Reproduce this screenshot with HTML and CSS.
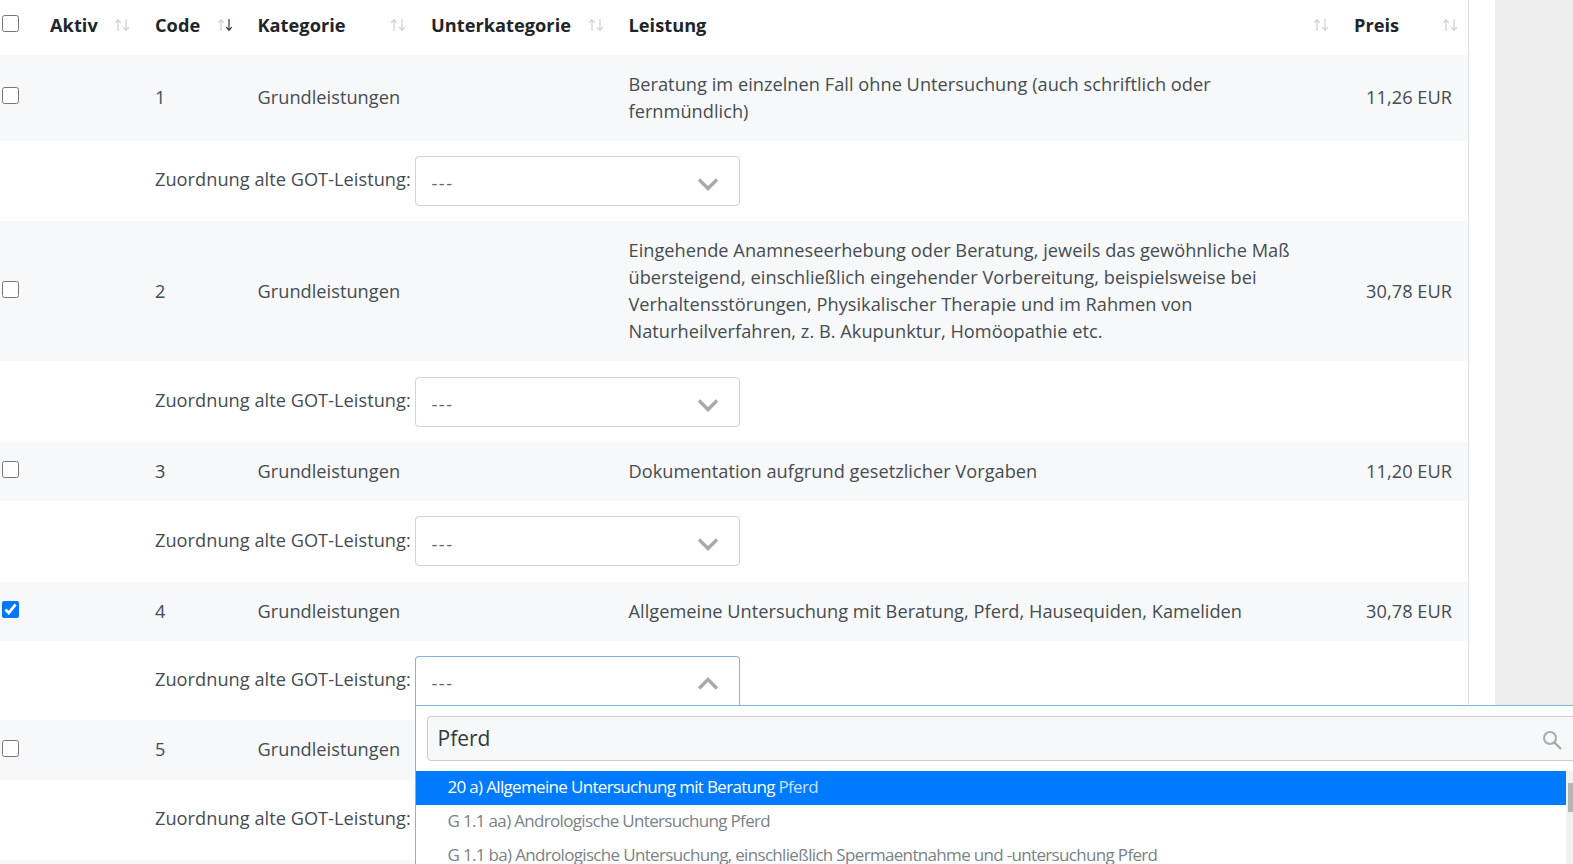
FILE: index.html
```html
<!DOCTYPE html>
<html lang="de">
<head>
  <meta charset="UTF-8" />
  <meta name="viewport" content="width=device-width, initial-scale=1.0"/>
  <title>Leistungen</title>
  <link rel="stylesheet" href="styles.css">
</head>
<body>
  <svg class="defs" width="0" height="0">
    <symbol id="arrow-up" viewBox="0 0 8 14"><path d="M4 13V2M1.2 4.8 4 1.6l2.8 3.2" fill="none" stroke="currentColor" stroke-width="1.2"/></symbol>
    <symbol id="arrow-down" viewBox="0 0 8 14"><path d="M4 1v11M1.2 9.2 4 12.4l2.8-3.2" fill="none" stroke="currentColor" stroke-width="1.2"/></symbol>
    <symbol id="chevron" viewBox="0 0 22 14"><path d="M2 2.5l9 9 9-9" fill="none" stroke="currentColor" stroke-width="3.4"/></symbol>
  </svg>

  <div class="page">
    <div class="content">
      <table class="services">
        <colgroup>
          <col class="col-check"><col class="col-active"><col class="col-code"><col class="col-cat"><col class="col-subcat"><col class="col-service"><col class="col-price">
        </colgroup>
        <thead>
          <tr>
            <th class="check"><input type="checkbox"></th>
            <th><div class="head">Aktiv <span class="sort"><svg><use href="#arrow-up"/></svg><svg><use href="#arrow-down"/></svg></span></div></th>
            <th><div class="head">Code <span class="sort"><svg><use href="#arrow-up"/></svg><svg class="on"><use href="#arrow-down"/></svg></span></div></th>
            <th><div class="head">Kategorie <span class="sort"><svg><use href="#arrow-up"/></svg><svg><use href="#arrow-down"/></svg></span></div></th>
            <th><div class="head">Unterkategorie <span class="sort"><svg><use href="#arrow-up"/></svg><svg><use href="#arrow-down"/></svg></span></div></th>
            <th><div class="head">Leistung <span class="sort"><svg><use href="#arrow-up"/></svg><svg><use href="#arrow-down"/></svg></span></div></th>
            <th class="last"><div class="head">Preis <span class="sort"><svg><use href="#arrow-up"/></svg><svg><use href="#arrow-down"/></svg></span></div></th>
          </tr>
        </thead>
        <tbody>
          <tr class="item">
            <td class="check"><input type="checkbox"></td>
            <td></td>
            <td>1</td>
            <td>Grundleistungen</td>
            <td></td>
            <td class="service">Beratung im einzelnen Fall ohne Untersuchung (auch schriftlich oder fernmündlich)</td>
            <td class="price">11,26 EUR</td>
          </tr>
          <tr class="mapping">
            <td colspan="2"></td>
            <td colspan="5">
              <div class="map-row">
                <label class="map-label">Zuordnung alte GOT-Leistung:</label>
                <div class="picker"><span class="dashes">---</span><svg class="chevron"><use href="#chevron"/></svg></div>
              </div>
            </td>
          </tr>
          <tr class="item">
            <td class="check"><input type="checkbox"></td>
            <td></td>
            <td>2</td>
            <td>Grundleistungen</td>
            <td></td>
            <td class="service">Eingehende Anamneseerhebung oder Beratung, jeweils das gewöhnliche Maß übersteigend, einschließlich eingehender Vorbereitung, beispielsweise bei Verhaltensstörungen, Physikalischer Therapie und im Rahmen von Naturheilverfahren, z. B. Akupunktur, Homöopathie etc.</td>
            <td class="price">30,78 EUR</td>
          </tr>
          <tr class="mapping">
            <td colspan="2"></td>
            <td colspan="5">
              <div class="map-row">
                <label class="map-label">Zuordnung alte GOT-Leistung:</label>
                <div class="picker"><span class="dashes">---</span><svg class="chevron"><use href="#chevron"/></svg></div>
              </div>
            </td>
          </tr>
          <tr class="item">
            <td class="check"><input type="checkbox"></td>
            <td></td>
            <td>3</td>
            <td>Grundleistungen</td>
            <td></td>
            <td class="service">Dokumentation aufgrund gesetzlicher Vorgaben</td>
            <td class="price">11,20 EUR</td>
          </tr>
          <tr class="mapping">
            <td colspan="2"></td>
            <td colspan="5">
              <div class="map-row">
                <label class="map-label">Zuordnung alte GOT-Leistung:</label>
                <div class="picker"><span class="dashes">---</span><svg class="chevron"><use href="#chevron"/></svg></div>
              </div>
            </td>
          </tr>
          <tr class="item">
            <td class="check"><input type="checkbox" checked></td>
            <td></td>
            <td>4</td>
            <td>Grundleistungen</td>
            <td></td>
            <td class="service">Allgemeine Untersuchung mit Beratung, Pferd, Hausequiden, Kameliden</td>
            <td class="price">30,78 EUR</td>
          </tr>
          <tr class="mapping">
            <td colspan="2"></td>
            <td colspan="5">
              <div class="map-row">
                <label class="map-label">Zuordnung alte GOT-Leistung:</label>
                <div class="picker open">
                  <span class="dashes">---</span><svg class="chevron flip"><use href="#chevron"/></svg>
                  <div class="dropdown">
                    <div class="search">
                      <input class="search-input" type="text" value="Pferd">
                      <svg class="search-icon" viewBox="0 0 20 20"><circle cx="8" cy="8" r="6" fill="none" stroke="currentColor" stroke-width="2"/><path d="M12.5 12.5 19 19" fill="none" stroke="currentColor" stroke-width="2.4"/></svg>
                    </div>
                    <div class="results">
                      <ul class="options">
                        <li class="active">20 a) Allgemeine Untersuchung mit Beratung <em>Pferd</em></li>
                        <li>G 1.1 aa) Andrologische Untersuchung Pferd</li>
                        <li>G 1.1 ba) Andrologische Untersuchung, einschließlich Spermaentnahme und -untersuchung Pferd</li>
                      </ul>
                      <div class="scrollbar"><div class="thumb"></div></div>
                    </div>
                  </div>
                </div>
              </div>
            </td>
          </tr>
          <tr class="item">
            <td class="check"><input type="checkbox"></td>
            <td></td>
            <td>5</td>
            <td>Grundleistungen</td>
            <td></td>
            <td class="service"></td>
            <td class="price"></td>
          </tr>
          <tr class="mapping">
            <td colspan="2"></td>
            <td colspan="5">
              <div class="map-row">
                <label class="map-label">Zuordnung alte GOT-Leistung:</label>
                <div class="picker"></div>
              </div>
            </td>
          </tr>
          <tr class="item">
            <td class="check"></td>
            <td colspan="6"></td>
          </tr>
        </tbody>
      </table>
    </div>
    <div class="gutter"></div>
    <div class="side"></div>
  </div>
</body>
</html>
```

FILE: styles.css
```css
html, body {
  height: 100%;
  overflow: hidden;
}
body {
  font-family: "Open Sans", Arial, sans-serif;
  font-size: 18.2px;
  letter-spacing: 0.03px;
  line-height: 27.3px;
  color: #454c52;
  background: #fff;
  margin: 0;
}
.defs {
  position: absolute;
}
.page {
  display: flex;
  height: 864px;
  overflow: hidden;
}
.content {
  width: 1468px;
  flex: none;
  border-right: 1px solid #dee2e6;
}
.gutter {
  width: 26px;
  flex: none;
}
.side {
  flex: 1;
  background: #eeeeee;
}

.services {
  width: 1468px;
  table-layout: fixed;
  border-collapse: collapse;
}
.col-check { width: 38px; }
.col-active { width: 105px; }
.col-code { width: 102.5px; }
.col-cat { width: 173.5px; }
.col-subcat { width: 197.5px; }
.col-service { width: 725.5px; }
.col-price { width: 126px; }

th {
  height: 51px;
  padding: 0 13px 4px 12px;
  font-weight: 700;
  color: #212529;
  text-align: left;
}
th.last {
  padding-right: 10px;
}
td {
  padding: 15.25px 12px;
}
.head {
  display: flex;
  justify-content: space-between;
  align-items: center;
}
.sort {
  display: flex;
  color: #ccd0d4;
}
.sort svg {
  width: 8px;
  height: 14px;
}
.sort .on {
  color: #2d3a44;
}
.check {
  padding: 0 0 0 2px;
}
.check input {
  display: block;
  width: 17px;
  height: 17px;
  margin: 0 0 4px;
}
th.check input {
  margin-bottom: 9px;
}
.item {
  background: #f7f8f9;
}
.item td {
  height: 28.3px;
  padding-top: 15.5px;
  padding-bottom: 15.5px;
}
.item .check {
  padding-top: 0;
  padding-bottom: 0;
}
.service {
  padding-right: 40px;
}
.price {
  text-align: right;
  padding-right: 16px;
}

.map-row {
  display: flex;
  align-items: center;
}
.map-label {
  width: 259.5px;
  margin-bottom: 2px;
  white-space: nowrap;
}
.picker {
  position: relative;
  box-sizing: border-box;
  width: 325px;
  height: 50px;
  padding: 6px 16px 0;
  border: 1px solid #ced4da;
  border-radius: 4px;
  display: flex;
  justify-content: space-between;
  align-items: center;
  color: #666;
}
.dashes {
  letter-spacing: 1.5px;
}
.chevron {
  width: 22px;
  height: 14px;
  margin: 0 4px 0 0;
  color: #a9a9a9;
}
.flip {
  transform: rotate(180deg);
}
.picker.open {
  height: 49px;
  border-color: #80b4e3;
  border-bottom: none;
  border-radius: 4px 4px 0 0;
}

.dropdown {
  position: absolute;
  left: -1px;
  top: 100%;
  width: 1200px;
  background: #fff;
  border: 1px solid #80b4e3;
  z-index: 5;
}
.search {
  position: relative;
  padding: 10px 12px 9.5px 11px;
}
.search-input {
  display: block;
  box-sizing: border-box;
  width: 100%;
  height: 45px;
  padding: 0 10px 2px;
  font: 21px "Open Sans", Arial, sans-serif;
  color: #343a40;
  background: #f7f8f9;
  border: 1px solid #ccc;
  border-radius: 4px;
}
.search-icon {
  position: absolute;
  left: 1126px;
  top: 24px;
  width: 20px;
  height: 20px;
  color: #a9a9a9;
}
.results {
  display: flex;
  width: 1167px;
}
.options {
  flex: 1;
  list-style: none;
  margin: 0;
  padding: 0;
  font-size: 17px;
  letter-spacing: -0.67px;
  color: #7b8287;
}
.options li {
  height: 34px;
  padding: 0 32px;
  line-height: 32px;
  white-space: nowrap;
}
.options .active {
  background: #007bff;
  color: #fff;
}
.options em {
  font-style: normal;
  color: #c5e0ff;
}
.scrollbar {
  width: 17px;
  padding-top: 12px;
  background: #f1f1f1;
}
.thumb {
  height: 29px;
  margin-left: 2px;
  background: #b5b5b5;
}
```
